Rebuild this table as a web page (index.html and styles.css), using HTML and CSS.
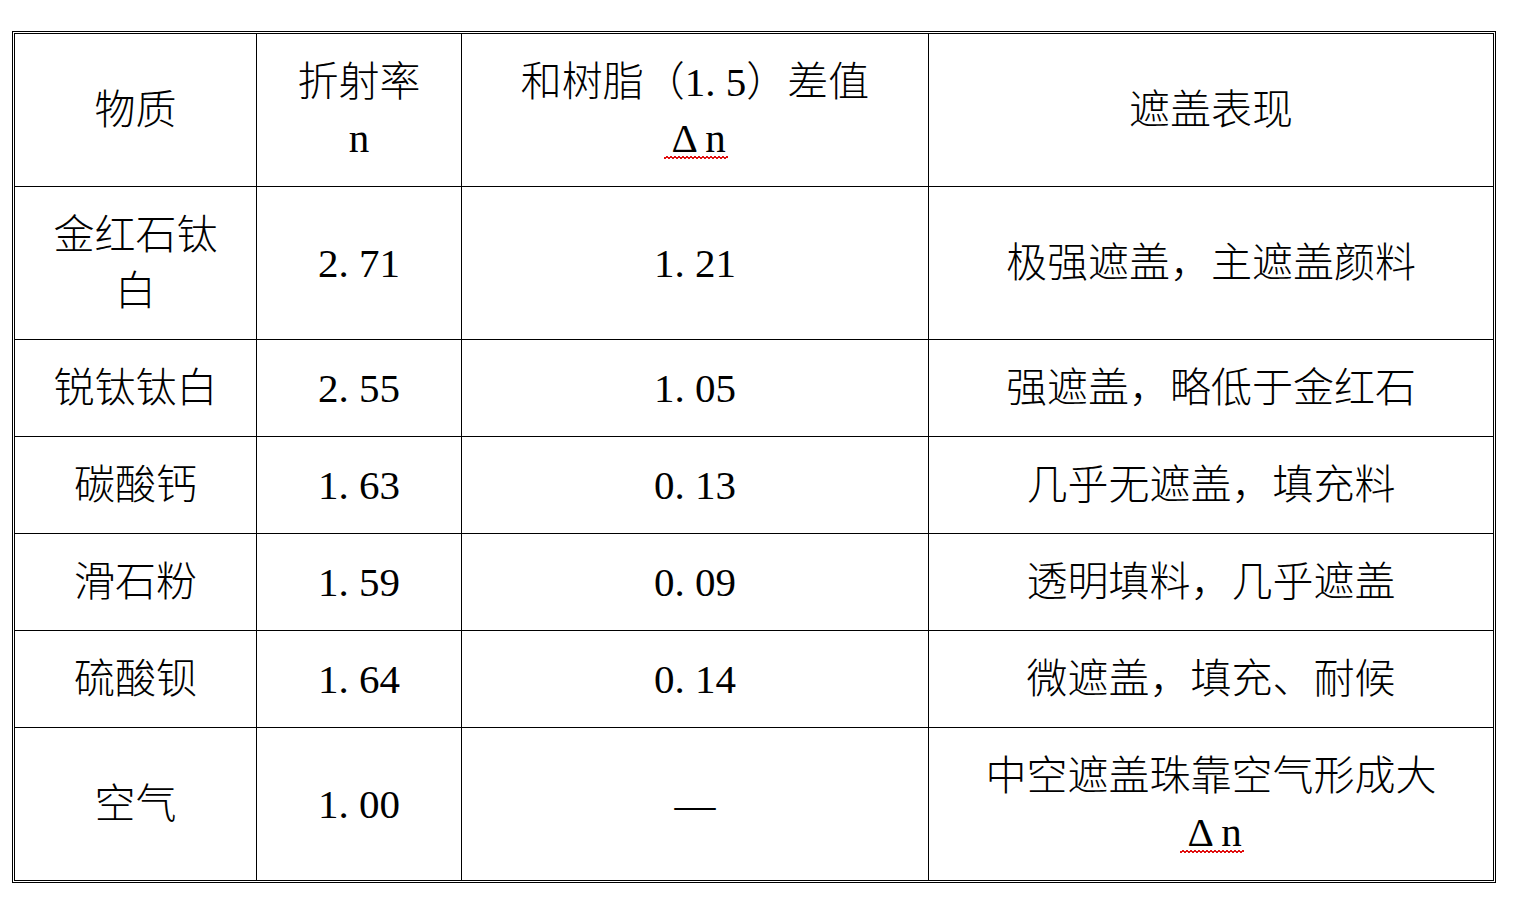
FILE: index.html
```html
<!DOCTYPE html>
<html lang="zh-CN">
<head>
<meta charset="utf-8">
<title>遮盖表现</title>
<link rel="stylesheet" href="styles.css">
</head>
<body>
<table class="sheet">
  <colgroup>
    <col class="c1"><col class="c2"><col class="c3"><col class="c4">
  </colgroup>
  <tr class="head">
    <td>物质</td>
    <td>折射率<br>n</td>
    <td>和树脂（1<span class="dot">.</span>5）差值<br><span class="spell"><span class="delta">Δ</span>n</span></td>
    <td>遮盖表现</td>
  </tr>
  <tr>
    <td>金红石钛白</td>
    <td>2<span class="dot">.</span>71</td>
    <td>1<span class="dot">.</span>21</td>
    <td>极强遮盖，主遮盖颜料</td>
  </tr>
  <tr>
    <td>锐钛钛白</td>
    <td>2<span class="dot">.</span>55</td>
    <td>1<span class="dot">.</span>05</td>
    <td>强遮盖，略低于金红石</td>
  </tr>
  <tr>
    <td>碳酸钙</td>
    <td>1<span class="dot">.</span>63</td>
    <td>0<span class="dot">.</span>13</td>
    <td>几乎无遮盖，填充料</td>
  </tr>
  <tr>
    <td>滑石粉</td>
    <td>1<span class="dot">.</span>59</td>
    <td>0<span class="dot">.</span>09</td>
    <td>透明填料，几乎遮盖</td>
  </tr>
  <tr>
    <td>硫酸钡</td>
    <td>1<span class="dot">.</span>64</td>
    <td>0<span class="dot">.</span>14</td>
    <td>微遮盖，填充、耐候</td>
  </tr>
  <tr>
    <td>空气</td>
    <td>1<span class="dot">.</span>00</td>
    <td>—</td>
    <td>中空遮盖珠靠空气形成大<br><span class="spell"><span class="delta">Δ</span>n</span></td>
  </tr>
</table>
</body>
</html>
```

FILE: styles.css
```css
html, body {
  margin: 0;
  background: #ffffff;
}
body {
  padding: 31px 0 0 12px;
  font-family: "Liberation Serif", "Noto Sans CJK SC", serif;
  font-size: 41px;
  font-weight: 300;
  color: #000000;
}
.sheet {
  border-collapse: separate;
  border-spacing: 0;
  border: 3px double #000000;
  table-layout: fixed;
  width: 1484px;
}
.c1 { width: 242px; }
.c2 { width: 205px; }
.c3 { width: 467px; }
.c4 { width: 564px; }
.sheet td {
  box-sizing: border-box;
  border-right: 1px solid #000000;
  border-bottom: 1px solid #000000;
  padding: 20px 24px;
  text-align: center;
  vertical-align: middle;
  line-height: 56px;
}
.sheet td:last-child {
  border-right: 0;
}
.sheet tr:last-child td {
  border-bottom: 0;
}
.dot {
  display: inline-block;
  width: 0.5em;
  text-align: left;
}
.delta {
  display: inline-block;
  width: 1em;
  text-align: center;
}
.spell {
  position: relative;
}
.spell::after {
  content: "";
  position: absolute;
  left: 0;
  right: -2px;
  bottom: 2px;
  height: 3px;
  background:
    linear-gradient(135deg, transparent 30%, #e01010 30% 62%, transparent 62%) 0 0 / 4px 3px repeat-x,
    linear-gradient(45deg, transparent 30%, #e01010 30% 62%, transparent 62%) 2px 0 / 4px 3px repeat-x;
}
```
